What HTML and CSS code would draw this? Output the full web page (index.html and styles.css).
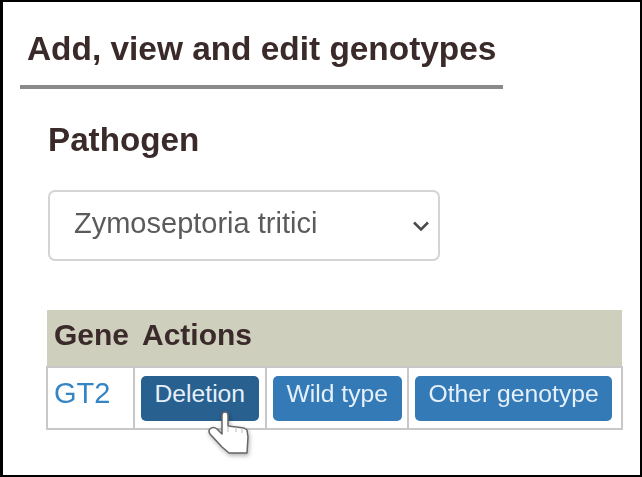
FILE: index.html
```html
<!doctype html>
<html lang="en">
 <head>
  <meta charset="UTF-8">
  <link rel="stylesheet" href="styles.css">
  <title>Genotypes</title>
 </head>
 <body>
  <div class="frame">
   <h2 class="title">Add, view and edit genotypes</h2>
   <section class="content">
    <h3 class="label">Pathogen</h3>
    <div class="picker-wrap">
     <select class="picker">
      <option>Zymoseptoria tritici</option>
     </select>
     <svg class="chevron" width="18" height="12" viewBox="0 0 18 12">
      <path d="M2 2.500l7 7 7-7" fill="none" stroke="#4a4a4a" stroke-width="2.500"/>
     </svg>
    </div>
    <table class="genes">
     <colgroup>
      <col class="col1"><col class="col2"><col class="col3"><col class="col4">
     </colgroup>
     <thead>
      <tr><th>Gene</th><th class="actions" colspan="3">Actions</th></tr>
     </thead>
     <tbody>
      <tr>
       <td><a href="#">GT2</a></td>
       <td class="hand-cell">
        <button class="btn active">Deletion</button>
        <svg class="hand" width="46" height="48" viewBox="0 0 46 48">
         <path d="M16 6C16 2 22 2 22 6L22 17L30 18L38 19L41 21L42 28L41 44L23 44L16 38L4 25Q2 22 4 20Q7 17 11 20L16 25Z" fill="#fff" stroke="#666" stroke-width="1.500" stroke-linejoin="round"/>
         <path d="M22 17v6M30 18v5M36 19v5" fill="none" stroke="#bbb"/>
        </svg>
       </td>
       <td><button class="btn">Wild type</button></td>
       <td><button class="btn">Other genotype</button></td>
      </tr>
     </tbody>
    </table>
   </section>
  </div>
 </body>
</html>
```

FILE: styles.css
```css
html,body{margin:0;padding:0;background:#fff;}
body{font-family:"Liberation Sans",Arial,sans-serif;color:#3a2a2a;}
.frame{
  width:642px;height:477px;box-sizing:border-box;
  border:2px solid #000;border-left-width:3px;
  padding:0 0 0 17px;overflow:hidden;
}
.title,.content{filter:blur(.4px);}
.title{
  width:476px;margin:0;padding:28px 0 0 7px;height:55px;
  font-size:33.400px;line-height:38px;font-weight:bold;
  border-bottom:4px solid #8a8a8a;
}
.content{padding:32px 0 0 28px;}
.label{margin:0;font-size:33.200px;line-height:38px;font-weight:bold;}
.picker-wrap{position:relative;width:392px;margin:31px 0 0 0;}
.picker{
  display:block;width:392px;height:71px;
  padding:0 24px 6px;appearance:none;
  font:29px "Liberation Sans",Arial,sans-serif;color:#5b5b5b;
  background:#fff;border:2px solid #d4d4d4;border-radius:7px;
}
.chevron{position:absolute;right:10px;top:30px;}
.genes{
  width:575px;margin:49px 0 0 -2px;
  border-collapse:collapse;table-layout:fixed;
}
.genes th{
  height:57px;padding:0 7px 6px;text-align:left;box-sizing:border-box;
  background:#cfcfbe;font-size:30px;font-weight:bold;
}
.genes .actions{padding-left:8px;}
.genes td{
  height:61px;padding:8px 6px 7px;vertical-align:top;box-sizing:border-box;
  border:2px solid #c8c8c8;
}
.hand-cell{position:relative;}
.col1{width:87px;}
.col2{width:132px;}
.col3{width:142px;}
.col4{width:214px;}
.genes a{color:#3585c5;text-decoration:none;font-size:29px;line-height:34px;}
.btn{
  display:block;height:45px;padding:0 13.500px 9px;
  border:0;border-radius:5px;
  background:#337ab7;color:#e6f0fa;
  font:24.700px "Liberation Sans",Arial,sans-serif;white-space:nowrap;
}
.btn.active{background:#286090;}
.hand{position:absolute;left:71px;top:41px;filter:drop-shadow(1px 2px 2px rgba(0,0,0,.3));}
```
